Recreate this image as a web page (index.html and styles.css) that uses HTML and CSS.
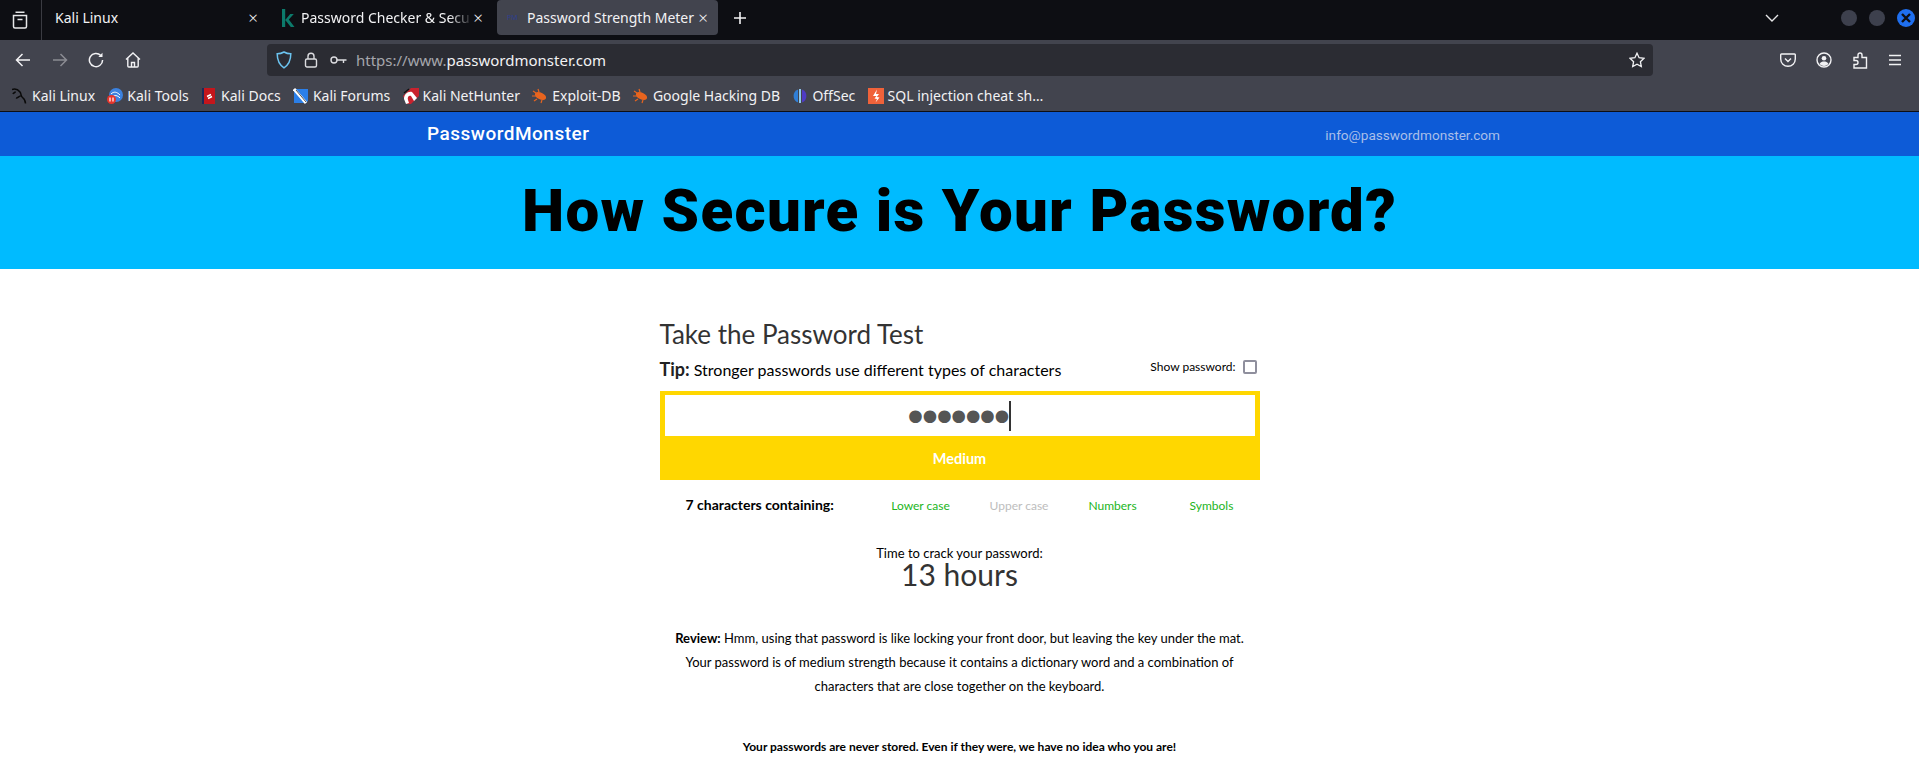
FILE: index.html
```html
<!DOCTYPE html>
<html lang="en">

<head>
    <meta charset="UTF-8">
    <meta name="viewport" content="width=device-width, initial-scale=1.0">
    <title>Password Strength Meter</title>
    <link rel="stylesheet" href="styles.css">
</head>

<body>
    <div class="tabbar">
        <div class="tab-list-btn">
            <svg width="16" height="18" viewBox="0 0 16 18" fill="none" stroke="#e6e6e8" stroke-width="1.5"><path d="M3.5 1.2h9M1.5 4.5h13v11a1.5 1.5 0 0 1-1.5 1.5H3a1.5 1.5 0 0 1-1.5-1.5z"/><path d="M5.5 8.5h5"/></svg>
        </div>
        <div class="tab tab-first"><span class="tab-title">Kali Linux</span><span class="tab-x">×</span></div>
        <div class="tab tab-second">
            <svg class="fav" width="14" height="18" viewBox="0 0 14 18"><path d="M1 0h3.200v18H1zM4.200 11l5-6h3.600l-5 5.600L13.500 18H9.800z" fill="#0c7a6b"/></svg>
            <span class="tab-title tab-fade">Password Checker &amp; Secu</span><span class="tab-x">×</span>
        </div>
        <div class="tab tab-active">
            <span class="fav-pm">PM</span>
            <span class="tab-title">Password Strength Meter</span><span class="tab-x">×</span>
        </div>
        <div class="tab-plus">
            <svg width="14" height="14" viewBox="0 0 14 14" stroke="#f2f2f4" stroke-width="1.600"><path d="M7 1v12M1 7h12"/></svg>
        </div>
        <div class="tabbar-end">
            <svg class="chevron" width="14" height="8" viewBox="0 0 14 8" fill="none" stroke="#e6e6e8" stroke-width="1.400"><path d="M1 1l6 6 6-6"/></svg>
            <span class="win-btn"></span>
            <span class="win-btn"></span>
            <span class="win-btn win-close">
                <svg width="10" height="10" viewBox="0 0 10 10" stroke="#0d0e13" stroke-width="2.400"><path d="M1 1l8 8M9 1l-8 8"/></svg>
            </span>
        </div>
    </div>

    <div class="toolbar">
        <div class="nav-icons">
            <svg width="16" height="16" viewBox="0 0 16 16" fill="none" stroke="#f2f2f4" stroke-width="1.500"><path d="M15 8H1.500M7.500 2L1.500 8l6 6"/></svg>
            <svg width="16" height="16" viewBox="0 0 16 16" fill="none" stroke="#8b8c93" stroke-width="1.500"><path d="M1 8h13.500M8.500 2l6 6-6 6"/></svg>
            <svg width="16" height="16" viewBox="0 0 16 16" fill="none" stroke="#f2f2f4" stroke-width="1.500"><path d="M12.800 3.500A6.600 6.600 0 1 0 14.600 8"/><path d="M14.500 0.800v4.200h-4.200z" fill="#f2f2f4" stroke="none"/></svg>
            <svg width="16" height="16" viewBox="0 0 16 16" fill="none" stroke="#f2f2f4" stroke-width="1.400"><path d="M1 7.500L8 1l7 6.500M2.800 6v8a1 1 0 0 0 1 1h8.400a1 1 0 0 0 1-1V6M6.500 15v-4.500h3V15"/></svg>
        </div>
        <div class="urlbar">
            <svg class="url-shield" width="16" height="18" viewBox="0 0 16 18" fill="none" stroke="#6cc4f0" stroke-width="1.500"><path d="M8 1c2 1.200 4.500 1.800 6.800 1.800 0 6-1.500 10.700-6.800 14-5.300-3.300-6.800-8-6.800-14C3.500 2.800 6 2.200 8 1z"/></svg>
            <svg class="url-lock" width="14" height="16" viewBox="0 0 14 16" fill="none" stroke="#dcdce0" stroke-width="1.400"><rect x="1.500" y="7" width="11" height="8" rx="1.500"/><path d="M4 7V4.200a3 3 0 0 1 6 0V7"/></svg>
            <svg class="url-key" width="17" height="10" viewBox="0 0 17 10" fill="none" stroke="#dcdce0" stroke-width="1.400"><circle cx="4" cy="5" r="3"/><path d="M7 5h9.500M13.500 5v3"/></svg>
            <span class="url-text"><span class="url-dim">https://www.</span>passwordmonster.com</span>
            <svg class="url-star" width="16" height="16" viewBox="0 0 16 16" fill="none" stroke="#f2f2f4" stroke-width="1.300"><path d="M8 1.200l2.100 4.500 4.900.6-3.600 3.400.9 4.900L8 12.200l-4.300 2.400.9-4.900L1 6.300l4.900-.6z"/></svg>
        </div>
        <div class="tool-icons">
            <svg width="16" height="16" viewBox="0 0 16 16" fill="none" stroke="#f2f2f4" stroke-width="1.400"><path d="M1.500 2h13a.8.8 0 0 1 .8.800V7a7.300 7.300 0 0 1-14.600 0V2.800A.8.8 0 0 1 1.500 2z"/><path d="M5 6.500l3 3 3-3"/></svg>
            <svg width="16" height="16" viewBox="0 0 16 16" fill="none" stroke="#f2f2f4" stroke-width="1.400"><circle cx="8" cy="8" r="7"/><circle cx="8" cy="6.300" r="2.300" fill="#f2f2f4" stroke="none"/><path d="M3.500 12c1-2 2.800-2.500 4.500-2.500s3.500.5 4.500 2.500a6 6 0 0 1-9 0z" fill="#f2f2f4" stroke="none"/></svg>
            <svg width="16" height="17" viewBox="0 0 16 17" fill="none" stroke="#f2f2f4" stroke-width="1.400"><path d="M2 5.500h4V3a2 2 0 0 1 4 0v2.500h4.500V16H2v-3.500h2a2 2 0 0 0 0-4H2z"/></svg>
            <svg width="14" height="12" viewBox="0 0 14 12" stroke="#f2f2f4" stroke-width="1.400"><path d="M1 1.500h12M1 6h12M1 10.500h12"/></svg>
        </div>
    </div>

    <div class="bookmarks">
        <div class="bm">
            <svg width="16" height="16" viewBox="0 0 16 16" fill="none" stroke="#0a0a0a" stroke-width="1.500"><path d="M0 1.500c3-1 6 0 8 2.500 1.500 2 .5 4 2.500 5.500 2 1.500 3 3 3 6M3.500 3.500C3 5 1.500 4.500 1 6M8.500 8c-2 .5-3 2.500-4.500 2"/></svg>
            <span>Kali Linux</span>
        </div>
        <div class="bm">
            <svg width="16" height="16" viewBox="0 0 16 16"><circle cx="9" cy="7" r="7" fill="#3b82e0"/><path d="M4 6c3-3 6-2 9 1M5 9c3-2 5-2 8 1" stroke="#fff" fill="none"/><circle cx="4.500" cy="11.500" r="4.500" fill="#e5342b"/><path d="M3 9.500v4M6 9.500v4" stroke="#fff" stroke-width="1.200"/></svg>
            <span>Kali Tools</span>
        </div>
        <div class="bm">
            <svg width="16" height="16" viewBox="0 0 16 16"><rect x="1" y="0" width="13" height="16" fill="#c4161c"/><rect x="1" y="0" width="2" height="16" fill="#1c2a5a"/><path d="M6 8.500l4-2M7 10.500l4-2" stroke="#fff" stroke-width="1.400"/></svg>
            <span>Kali Docs</span>
        </div>
        <div class="bm">
            <svg width="16" height="16" viewBox="0 0 16 16"><path d="M3 1h12v12l-2 2H1V3z" fill="#2b7fe8"/><path d="M1 1l12 14" stroke="#fff" stroke-width="3"/><path d="M3 2l10 12" stroke="#222" stroke-width=".8"/></svg>
            <span>Kali Forums</span>
        </div>
        <div class="bm">
            <svg width="16" height="16" viewBox="0 0 16 16"><path d="M0 8L8 0h8v8l-8 8H4z" fill="#c9222e"/><path d="M1 11c0-5 4-8 8-7l5 6-3 3-3-5c-2-1-4 1-3 4l1 3-3 1z" fill="#fff"/><path d="M1 5L6 1" stroke="#111" stroke-width="1.500"/></svg>
            <span>Kali NetHunter</span>
        </div>
        <div class="bm">
            <svg width="16" height="16" viewBox="0 0 16 16"><ellipse cx="8.500" cy="8" rx="6" ry="3.400" transform="rotate(25 8.500 8)" fill="#e8641e"/><path d="M4 5L1 3M4 8L0 8M5 11l-3 2M7 4L6 1M10 12l-1 3" stroke="#e8641e" stroke-width="1.200"/></svg>
            <span>Exploit-DB</span>
        </div>
        <div class="bm">
            <svg width="16" height="16" viewBox="0 0 16 16"><ellipse cx="8.500" cy="8" rx="6" ry="3.400" transform="rotate(25 8.500 8)" fill="#e8641e"/><path d="M4 5L1 3M4 8L0 8M5 11l-3 2M7 4L6 1M10 12l-1 3" stroke="#e8641e" stroke-width="1.200"/></svg>
            <span>Google Hacking DB</span>
        </div>
        <div class="bm">
            <svg width="16" height="16" viewBox="0 0 16 16"><path d="M6 1.500a7 7 0 0 0 0 13z" fill="#2f7fd8"/><path d="M10 1.500a7 7 0 0 1 0 13z" fill="#4f3bc4"/><path d="M7 1h2v14H7z" fill="#8fc8ee"/></svg>
            <span>OffSec</span>
        </div>
        <div class="bm">
            <svg width="16" height="16" viewBox="0 0 16 16"><rect width="16" height="16" fill="#f0623a"/><path d="M9 1.500L5 8h3.500L6.500 10.500 9 11l-1.500 3.500L11.500 9.500 8.800 9 11 6H8z" fill="#fff"/></svg>
            <span>SQL injection cheat sh…</span>
        </div>
    </div>

    <div class="site-head">
        <div class="logo">PasswordMonster</div>
        <div class="site-mail">info@passwordmonster.com</div>
    </div>
    <div class="hero">
        <h1>How Secure is Your Password?</h1>
    </div>

    <div class="content">
        <h2>Take the Password Test</h2>
        <div class="tip-row">
            <p class="tip"><b>Tip:</b> Stronger passwords use different types of characters</p>
            <label class="show-pass">Show password: <span class="checkbox"></span></label>
        </div>
        <div class="meter">
            <div class="pass-input"><span class="dots">●●●●●●●</span><span class="caret"></span></div>
            <div class="meter-label">Medium</div>
        </div>
        <div class="char-row">
            <div class="char-count">7 characters containing:</div>
            <div class="char-types">
                <span class="ok">Lower case</span>
                <span class="no">Upper case</span>
                <span class="ok">Numbers</span>
                <span class="ok">Symbols</span>
            </div>
        </div>
        <div class="crack">
            <div class="crack-label">Time to crack your password:</div>
            <div class="crack-time">13 hours</div>
        </div>
        <p class="review"><b>Review:</b> Hmm, using that password is like locking your front door, but leaving the key under the mat. Your password is of medium strength because it contains a dictionary word and a combination of characters that are close together on the keyboard.</p>
        <p class="note">Your passwords are never stored. Even if they were, we have no idea who you are!</p>
    </div>
</body>

</html>
```
FILE: styles.css
```css
html, body {
    margin: 0;
    height: 772px;
    overflow: hidden;
    background-color: white;
}

body {
    font-family: "Noto Sans", sans-serif;
}

svg {
    display: block;
    flex-shrink: 0;
}

/* browser tabs */
.tabbar {
    height: 40px;
    display: flex;
    background-color: #0d0e13;
    color: #f2f2f4;
    font-size: 14px;
}

.tab-list-btn {
    width: 42px;
    box-sizing: border-box;
    border-right: 1px solid #3a3b42;
    display: flex;
    align-items: center;
    justify-content: center;
    padding-right: 2px;
}

.tab {
    height: 35px;
    display: flex;
    align-items: center;
    box-sizing: border-box;
}

.tab-title {
    flex-grow: 1;
    white-space: nowrap;
    overflow: hidden;
}

.tab-x {
    font-size: 17px;
    line-height: 17px;
    font-weight: 300;
}

.tab-first {
    width: 228px;
    padding: 0 12px 0 13px;
}

.tab-second {
    width: 227px;
    padding: 0 14px 0 11px;
}

.fav {
    margin-right: 6px;
}

.tab-fade {
    -webkit-mask-image: linear-gradient(to left, transparent, black 24px);
    mask-image: linear-gradient(to left, transparent, black 24px);
}

.tab-active {
    width: 221px;
    padding: 0 10px;
    background-color: #42444e;
    border-radius: 4px;
}

.fav-pm {
    width: 20px;
    font-size: 7px;
    color: #2f3f8f;
}

.tab-plus {
    width: 44px;
    height: 35px;
    display: flex;
    align-items: center;
    justify-content: center;
}

.tabbar-end {
    flex-grow: 1;
    display: flex;
    align-items: center;
    justify-content: flex-end;
    height: 35px;
    padding-right: 4px;
}

.chevron {
    margin-right: 62px;
}

.win-btn {
    width: 16px;
    height: 16px;
    margin-right: 12px;
    border-radius: 50%;
    background-color: #3d404d;
}

.win-close {
    width: 18px;
    height: 18px;
    margin-right: 0;
    background-color: #1f6fef;
    display: flex;
    align-items: center;
    justify-content: center;
}

/* browser toolbar */
.toolbar {
    height: 42px;
    display: flex;
    background-color: #42444e;
    padding-top: 4px;
    box-sizing: border-box;
}

.nav-icons {
    width: 267px;
    height: 32px;
    display: flex;
    align-items: center;
    gap: 20.500px;
    padding-left: 15px;
    box-sizing: border-box;
}

.urlbar {
    width: 1386px;
    height: 32px;
    display: flex;
    align-items: center;
    background-color: #2b2c33;
    border-radius: 4px;
    padding-left: 9px;
    box-sizing: border-box;
}

.url-lock {
    margin-left: 12px;
}

.url-key {
    margin-left: 12px;
}

.url-text {
    margin-left: 9px;
    flex-grow: 1;
    font-size: 15px;
    color: #f2f2f4;
}

.url-dim {
    color: #a5a6ac;
}

.url-star {
    margin-right: 8px;
}

.tool-icons {
    flex-grow: 1;
    height: 32px;
    display: flex;
    align-items: center;
    gap: 20px;
    padding-left: 127px;
}

/* bookmarks */
.bookmarks {
    height: 30px;
    display: flex;
    align-items: center;
    gap: 12.300px;
    padding: 0 0 2px 12px;
    box-sizing: border-box;
    background-color: #42444e;
    border-bottom: 1px solid #0d0e13;
    color: #f2f2f4;
    font-size: 14px;
}

.bm {
    display: flex;
    align-items: center;
    gap: 4px;
}

/* site header */
.site-head {
    height: 44px;
    display: flex;
    align-items: center;
    justify-content: space-between;
    padding: 0 419px 2px 427px;
    box-sizing: border-box;
    background-color: #0d5bd7;
    font-family: Roboto, sans-serif;
}

.logo {
    color: white;
    font-size: 19px;
    font-weight: 500;
    letter-spacing: 0.500px;
}

.site-mail {
    color: #a9bfe9;
    font-size: 13.600px;
    padding-top: 4px;
}

.hero {
    height: 113px;
    display: flex;
    align-items: center;
    justify-content: center;
    padding-bottom: 4px;
    box-sizing: border-box;
    background-color: #00bbff;
}

.hero h1 {
    margin: 0;
    color: black;
    font-family: Roboto, sans-serif;
    font-size: 60px;
    font-weight: 900;
    letter-spacing: 1.300px;
}

/* password test */
.content {
    width: 600px;
    margin: 0 auto;
    font-family: Lato, sans-serif;
    color: black;
}

.content h2 {
    margin: 0;
    padding-top: 47px;
    font-size: 26px;
    line-height: 36px;
    font-weight: 400;
    color: #333;
}

.tip-row {
    height: 24px;
    margin-top: 5px;
    display: flex;
    justify-content: space-between;
    align-items: center;
}

.tip {
    margin: 0;
    font-size: 16px;
}

.tip b {
    font-size: 18px;
    font-weight: 700;
    color: #222;
}

.show-pass {
    display: flex;
    align-items: center;
    gap: 7px;
    font-size: 12px;
    padding-right: 3px;
    padding-bottom: 5px;
}

.checkbox {
    width: 10px;
    height: 10px;
    border: 2px solid #8f8f9d;
    border-radius: 2px;
}

.meter {
    margin-top: 10px;
    height: 89px;
    background-color: #ffd700;
    padding: 4px 5px 0;
    box-sizing: border-box;
}

.pass-input {
    height: 41px;
    display: flex;
    align-items: center;
    justify-content: center;
    background-color: white;
    color: #555;
    font-size: 16.500px;
    font-family: "DejaVu Sans", sans-serif;
}

.caret {
    width: 1.500px;
    height: 30px;
    background-color: #333;
}

.meter-label {
    height: 43px;
    line-height: 46px;
    text-align: center;
    color: white;
    font-size: 14.500px;
    font-weight: 700;
}

.char-row {
    height: 48px;
    display: flex;
    align-items: center;
}

.char-count {
    width: 210px;
    flex-shrink: 0;
    padding-left: 26px;
    box-sizing: border-box;
    font-size: 14px;
    font-weight: 700;
    white-space: nowrap;
}

.char-types {
    flex-grow: 1;
    display: grid;
    grid-template-columns: 102px 95px 92px 106px;
    text-align: center;
    font-size: 12px;
    padding-top: 2px;
}

.ok {
    color: #22b51c;
}

.no {
    color: #bdbdbd;
}

.crack {
    margin-top: 18px;
    text-align: center;
}

.crack-label {
    font-size: 13px;
    line-height: 15px;
}

.crack-time {
    font-size: 30px;
    line-height: 26px;
    color: #333;
}

.review {
    margin: 39px 0 0;
    padding: 0 12px;
    text-align: center;
    font-size: 13px;
    line-height: 24px;
}

.review b {
    font-weight: 700;
}

.note {
    margin: 41px 0 0;
    text-align: center;
    font-size: 12px;
    line-height: 16px;
    font-weight: 700;
}
```
